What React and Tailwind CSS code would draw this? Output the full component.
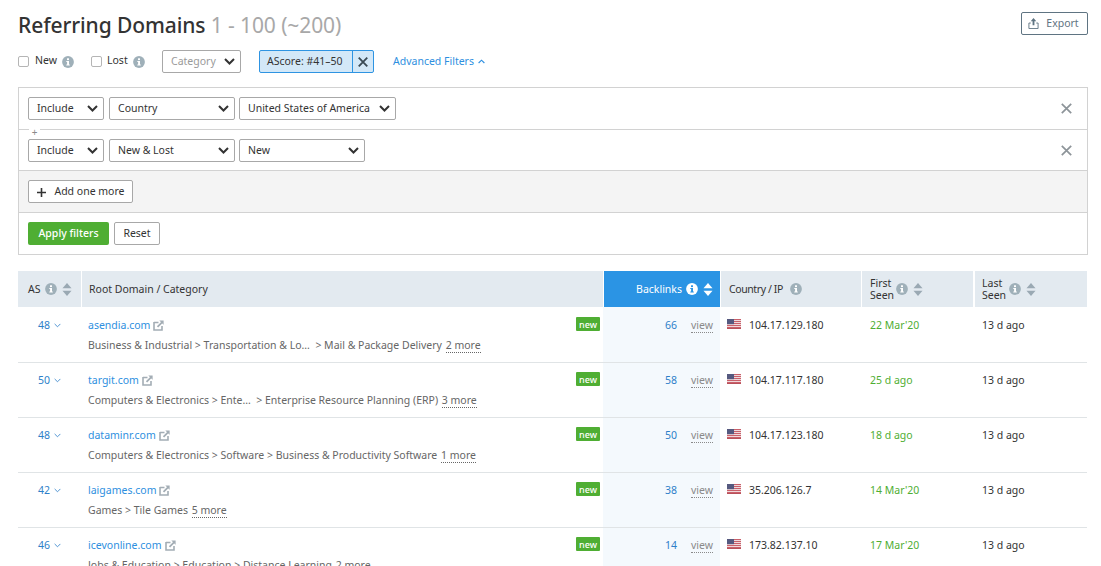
import React from 'react';

const Chevron = ({ className = 'w-[11px] h-[7px]', color = '#333', w = 2 }) => (
  <svg viewBox="0 0 11 7" className={className} fill="none" stroke={color} strokeWidth={w}><path d="M1 1l4.5 4.5L10 1" /></svg>
);
const Info = ({ bg = '#9fb0b9', fg = '#fff', className = '' }) => (
  <svg viewBox="0 0 12 12" className={`w-[12px] h-[12px] shrink-0 ${className}`}>
    <circle cx="6" cy="6" r="5.9" fill={bg} />
    <rect x="5" y="2.3" width="2" height="1.8" fill={fg} />
    <path d="M4.3 5h2.7v3.5h.8v1H4.3v-1h.8V6h-.8z" fill={fg} />
  </svg>
);
const Sort = ({ color = '#9aa9b3', className = '' }) => (
  <svg viewBox="0 0 10 13" className={`w-[10px] h-[13px] shrink-0 ${className}`} fill={color}>
    <path d="M5 0l4.5 5.2h-9z" /><path d="M5 13L.5 7.8h9z" />
  </svg>
);
const Ext = () => (
  <svg viewBox="0 0 11 11" className="w-[11px] h-[11px] shrink-0" fill="none">
    <path d="M1 2.5h4.5M1 2v8h8V6" stroke="#a3adb5" strokeWidth="1.6" />
    <path d="M4.5 6.8L9.5 1.8" stroke="#a3adb5" strokeWidth="1.8" />
    <path d="M6.3 0.5H10.6V4.8z" fill="#a3adb5" />
  </svg>
);
const Close = ({ size = 11, color = '#8d9499', w = 1.7 }) => (
  <svg viewBox="0 0 11 11" width={size} height={size} fill="none" stroke={color} strokeWidth={w}><path d="M.8.8l9.4 9.4M10.2.8L.8 10.2" /></svg>
);
const Flag = () => (
  <svg viewBox="0 0 14 10" className="w-[14px] h-[10px] shrink-0">
    <rect width="14" height="10" fill="#f3e6e8" />
    {[0, 2, 4, 6, 8].map((y) => <rect key={y} y={y} width="14" height="1.1" fill="#c9606a" />)}
    <rect y="9" width="14" height="1" fill="#b9505a" />
    <rect width="7" height="5.2" fill="#55597f" />
  </svg>
);
const Select = ({ w, children, gray }) => (
  <div className={`flex items-center justify-between h-[23px] border border-[#a8a8a8] rounded-[2px] bg-white pl-[8px] pr-[5px] ${gray ? 'text-[#9a9a9a]' : 'text-[#333]'} ${w}`}>
    <span className="whitespace-nowrap">{children}</span><Chevron />
  </div>
);

const rows = [
  { as: 48, d: 'asendia.com', cat: <>Business &amp; Industrial &gt; Transportation &amp; Lo…&nbsp; &gt; Mail &amp; Package Delivery</>, more: '2 more', b: 66, ip: '104.17.129.180', first: "22 Mar'20" },
  { as: 50, d: 'targit.com', cat: <>Computers &amp; Electronics &gt; Ente…&nbsp; &gt; Enterprise Resource Planning (ERP)</>, more: '3 more', b: 58, ip: '104.17.117.180', first: '25 d ago' },
  { as: 48, d: 'dataminr.com', cat: <>Computers &amp; Electronics &gt; Software &gt; Business &amp; Productivity Software</>, more: '1 more', b: 50, ip: '104.17.123.180', first: '18 d ago' },
  { as: 42, d: 'laigames.com', cat: <>Games &gt; Tile Games</>, more: '5 more', b: 38, ip: '35.206.126.7', first: "14 Mar'20" },
  { as: 46, d: 'icevonline.com', cat: <>Jobs &amp; Education &gt; Education &gt; Distance Learning</>, more: '2 more', b: 14, ip: '173.82.137.10', first: "17 Mar'20" },
];
const cols = 'grid grid-cols-[63px_1px_521px_1px_116px_1px_140px_1px_111px_2px_112px]';

export default function App() {
  return (
    <div className="h-[566px] w-[1101px] overflow-hidden bg-white pl-[18px] pr-[13px] text-[10.5px] text-[#333] font-['Noto_Sans','Open_Sans',sans-serif]">
      <div className="flex items-start justify-between h-[50px] pt-[11px]">
        <h1 className="text-[21px] leading-[28px] font-medium text-[#333] tracking-[-0.1px]">Referring Domains <span className="font-normal text-[#a8a8a8]">1 - 100 (~200)</span></h1>
        <div className="flex items-center justify-center gap-[7px] w-[67px] h-[23px] mt-[1px] pr-[2px] border border-[#5f7482] rounded-[2px] text-[#5f7482]">
          <svg viewBox="0 0 12 12" className="w-[11px] h-[11px]" fill="none"><path d="M6 0l3 3.5H7V8H5V3.5H3z" fill="#5f7482" /><path d="M3 5.5H1v6h10v-6H9" stroke="#5f7482" /></svg>
          Export
        </div>
      </div>

      <div className="flex items-center h-[23px]">
        <span className="w-[11px] h-[11px] border border-[#b5b5b5] rounded-[2px] mr-[6px]" />
        <span className="-mt-[2px] w-[22px]">New</span>
        <Info className="ml-[5px]" />
        <span className="w-[11px] h-[11px] border border-[#b5b5b5] rounded-[2px] ml-[17px] mr-[5px]" />
        <span className="-mt-[2px] w-[21px]">Lost</span>
        <Info className="ml-[5px]" />
        <Select w="w-[79px] ml-[17px]" gray>Category</Select>
        <div className="flex h-[23px] ml-[18px] border border-[#2e94e2] rounded-[2px] bg-[#d3e8f8]">
          <span className="flex items-center pl-[7px] w-[92px] whitespace-nowrap">AScore: #41–50</span>
          <span className="flex items-center justify-center w-[21px] border-l border-[#2e94e2]"><Close size={10} color="#3a4a55" w={2} /></span>
        </div>
        <span className="ml-[19px] text-[#2e8fe0] flex items-center gap-[4px]">Advanced Filters
          <svg viewBox="0 0 8 5" className="w-[7px] h-[5px]" fill="none" stroke="#2e8fe0" strokeWidth="1.3"><path d="M.7 4.2L4 1l3.3 3.2" /></svg>
        </span>
      </div>

      <div className="mt-[14px] h-[168px] border border-[#d2d2d2] flex flex-col">
        <div className="h-[41px] flex items-center gap-[5px] pl-[9px] pr-[15px]">
          <Select w="w-[76px]">Include</Select>
          <Select w="w-[126px]">Country</Select>
          <Select w="w-[157px] -ml-[1px]">United States of America</Select>
          <span className="ml-auto"><Close size={11} /></span>
        </div>
        <div className="relative h-[41px] flex items-center gap-[5px] pt-[1px] pl-[9px] pr-[15px] border-t border-[#d2d2d2]">
          <span className="absolute left-[10px] -top-[3px] w-[11px] h-[9px] bg-white flex items-center justify-center text-[10px] leading-none text-[#8a8a8a]">+</span>
          <Select w="w-[76px]">Include</Select>
          <Select w="w-[126px]">New &amp; Lost</Select>
          <Select w="w-[126px] -ml-[1px]">New</Select>
          <span className="ml-auto"><Close size={11} /></span>
        </div>
        <div className="h-[43px] flex items-center pl-[9px] bg-[#f4f4f4] border-y border-[#d2d2d2]">
          <div className="flex items-center justify-center gap-[8px] w-[105px] h-[23px] pt-[1px] pl-[1px] bg-white border border-[#a8a8a8] rounded-[2px]">
            <svg viewBox="0 0 9 9" className="w-[9px] h-[9px]" stroke="#333" strokeWidth="1.6"><path d="M4.5 0v9M0 4.5h9" /></svg>
            Add one more
          </div>
        </div>
        <div className="flex-1 flex items-center gap-[5px] pl-[9px]">
          <div className="flex items-center justify-center w-[81px] h-[23px] bg-[#4fae33] rounded-[2px] text-white font-medium">Apply filters</div>
          <div className="flex items-center justify-center w-[46px] h-[23px] border border-[#a8a8a8] rounded-[2px]">Reset</div>
        </div>
      </div>

      <div className="mt-[16px]">
        <div className={`${cols} h-[36px] w-[1069px]`}>
          <div className="bg-[#e3eaf0] flex items-center pl-[10px] gap-[4px]"><span className="w-[13px] pt-[1px]">AS</span><Info /><Sort className="ml-[1px]" /></div>
          <div />
          <div className="bg-[#e3eaf0] flex items-center pl-[7px] pt-[1px]">Root Domain / Category</div>
          <div />
          <div className="bg-[#2b94e4] text-white flex items-center justify-end pr-[7px] gap-[4px]"><span className="pt-[1px]">Backlinks</span><Info bg="#fff" fg="#2b94e4" /><Sort color="#fff" className="ml-[1px]" /></div>
          <div />
          <div className="bg-[#e3eaf0] flex items-center pl-[8px]"><span className="w-[61px] pt-[1px] tracking-[-0.4px]">Country / IP</span><Info /></div>
          <div />
          <div className="bg-[#e3eaf0] flex items-center pl-[8px] leading-[12px]"><span className="w-[26px]">First<br />Seen</span><Info /><Sort className="ml-[5px]" /></div>
          <div />
          <div className="bg-[#e3eaf0] flex items-center pl-[7px] leading-[12px]"><span className="w-[27px]">Last<br />Seen</span><Info /><Sort className="ml-[5px]" /></div>
        </div>
        {rows.map((r, i) => {
          const pt = i === 0 ? 'pt-[11px]' : 'pt-[10px]';
          return (
            <div key={r.d} className={`${cols} ${i === 0 ? 'h-[56px]' : 'h-[55px]'} w-[1069px] border-b border-[#e0e4e6]`}>
              <div className={`flex items-start justify-end pr-[20px] ${pt} gap-[4px] text-[#2e7fc9] leading-[14px]`}>{r.as}
                <Chevron className="w-[7px] h-[5px] mt-[5px]" color="#2e7fc9" w={1.3} /></div>
              <div />
              <div className={`relative pl-[6px] ${pt} leading-[14px] whitespace-nowrap`}>
                <div className="flex items-center gap-[3px] text-[#2e8fe0]">{r.d}<Ext /></div>
                <div className="mt-[6px] text-[#666]">{r.cat} <span className="ml-[1px] border-b border-dotted border-[#666]">{r.more}</span></div>
                <span className={`absolute right-[3px] ${i === 0 ? 'top-[10px]' : 'top-[9px]'} h-[14px] w-[24px] flex items-center justify-center rounded-[1px] bg-[#4fae33] text-white text-[9px] font-medium leading-none`}>new</span>
              </div>
              <div className={`bg-[#f4f9fd] col-span-3 mr-[1px] flex items-start justify-end pr-[7px] ${pt} leading-[14px]`}>
                <span className="text-[#2e7fc9] mr-[14px]">{r.b}</span>
                <span className="text-[#8a8a8a] border-b border-dotted border-[#8a8a8a]">view</span>
              </div>
              <div className={`flex items-start gap-[8px] pl-[6px] ${pt} leading-[14px]`}><span className="mt-[1px]"><Flag /></span><span>{r.ip}</span></div>
              <div />
              <div className={`pl-[8px] ${pt} leading-[14px] text-[#4fae33]`}>{r.first}</div>
              <div />
              <div className={`pl-[7px] ${pt} leading-[14px]`}>13 d ago</div>
            </div>
          );
        })}
      </div>
    </div>
  );
}
